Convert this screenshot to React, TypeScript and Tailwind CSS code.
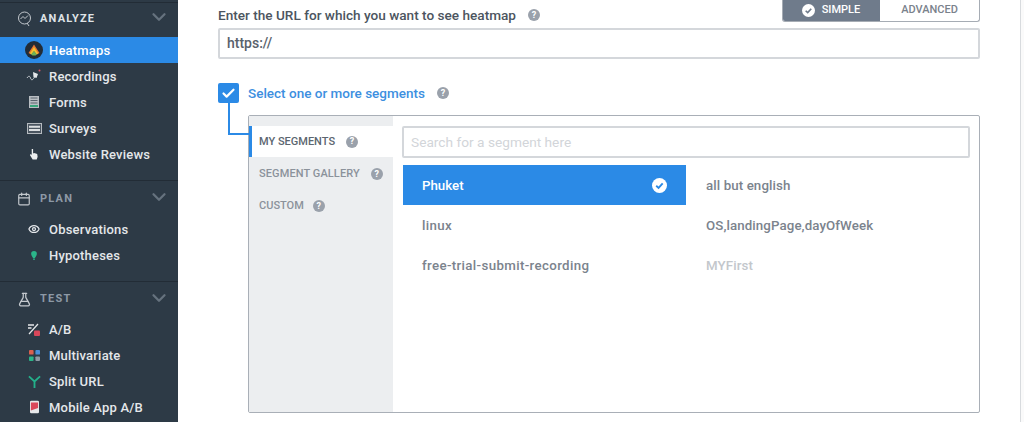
import React from 'react';
import { ChevronDown, Calendar, FlaskConical, Eye, Check } from 'lucide-react';

const font = "font-['Roboto','Liberation_Sans',sans-serif]";

const Help = ({ className = '' }: { className?: string }) => (
  <span className={`inline-flex items-center justify-center w-[12px] h-[12px] rounded-full bg-[#9aa1ab] text-white text-[9px] font-bold leading-none ${className}`}>?</span>
);

const CheckCircle = ({ color, size }: { color: string; size: number }) => (
  <svg width={size} height={size} viewBox="0 0 16 16">
    <circle cx="8" cy="8" r="8" fill="#fff" />
    <path d="M4.5 8.3 7 10.6 11.4 5.8" fill="none" stroke={color} strokeWidth="2" />
  </svg>
);

const HeatIcon = () => (
  <svg width="18" height="18" viewBox="0 0 18 18">
    <circle cx="9" cy="9" r="9" fill="#222c36" />
    <path d="M9 3.500 14.500 12 11.800 13.500 9 10 6.200 13.500 3.500 12Z" fill="#e8752e" />
    <path d="M9 6 13 12.300 11.800 13.500 9 10 6.200 13.500 5 12.300Z" fill="#f2c230" />
    <path d="M9 10 11.800 13.500 10.500 14.500H7.500L6.200 13.500Z" fill="#6fb255" />
  </svg>
);

const RecIcon = () => (
  <svg width="16" height="14" viewBox="0 0 16 14">
    <path d="M1 9c1.500-2.500 3-2 3.500 0s2 3 4-1" fill="none" stroke="#cfd4d9" strokeWidth="1" />
    <path d="M7 3 12 5 10.500 9 7.500 8Z" fill="#e6e8ea" />
    <circle cx="13.500" cy="1.500" r="1" fill="#e0566a" />
  </svg>
);

const FormIcon = () => (
  <svg width="10" height="12" viewBox="0 0 10 12">
    <rect width="10" height="12" fill="#b9bec3" />
    <path d="M1.500 2h7M1.500 4.500h7M1.500 7h7" stroke="#5a646e" strokeWidth="1" />
    <rect x="1" y="9" width="8" height="2" fill="#3aa67c" />
  </svg>
);

const SurveyIcon = () => (
  <svg width="15" height="11" viewBox="0 0 15 11">
    <rect x=".5" y=".5" width="14" height="10" fill="#4a5560" stroke="#b5babf" />
    <path d="M2 3.700h11M2 7h11" stroke="#dcdfe1" strokeWidth="2" />
  </svg>
);

const HandIcon = () => (
  <svg width="10" height="12" viewBox="0 0 11 13">
    <path d="M3 1h1.500v5l1-.5 1 .3 1 .2 1.500.5.500 3-1 3H4L1 7.500l1-1L3 7.500Z" fill="#eceeef" />
  </svg>
);

const BulbIcon = () => (
  <svg width="6" height="11" viewBox="0 0 8 12">
    <path d="M4 0a3.800 3.800 0 0 1 3.800 3.800C7.800 6.500 5.500 8 5 10H3C2.500 8 .2 6.500.2 3.800A3.800 3.800 0 0 1 4 0Z" fill="#2bb58a" />
    <rect x="3" y="10.500" width="2" height="1.500" fill="#2bb58a" />
  </svg>
);

const AbIcon = () => (
  <svg width="12" height="13" viewBox="0 0 12 13">
    <path d="M1 11 10 1" stroke="#e6e8ea" strokeWidth="1.200" />
    <path d="M0 2h6M0 5h3.500" stroke="#e6e8ea" strokeWidth="1.500" />
    <rect x="6" y="7.500" width="6" height="5.500" rx="1" fill="#d9475a" />
  </svg>
);

const MultiIcon = () => (
  <svg width="11" height="11" viewBox="0 0 12 12">
    <rect width="5" height="5" rx="1" fill="#d9604f" />
    <rect x="7" width="5" height="5" rx="1" fill="#4a8fd8" />
    <rect y="7" width="5" height="5" rx="1" fill="#2bb58a" />
    <rect x="7" y="7" width="5" height="5" rx="1" fill="#8f9aa5" />
  </svg>
);

const SplitIcon = () => (
  <svg width="15" height="13" viewBox="0 0 15 14">
    <path d="M1.500 1.500 7.500 7l6-5.500M7.500 7v7" fill="none" stroke="#23b08a" strokeWidth="2" />
  </svg>
);

const MobileIcon = () => (
  <svg width="9" height="14" viewBox="0 0 10 14">
    <rect width="10" height="14" rx="1.500" fill="#e6e8ea" />
    <path d="M1 2h8v6L1 11Z" fill="#d9475a" />
  </svg>
);

const AnalyzeIcon = () => (
  <svg width="15" height="16" viewBox="0 0 15 16" fill="none" stroke="#c3c8cd" strokeWidth="1">
    <circle cx="7.500" cy="7" r="6" />
    <path d="M3.500 8 6 5.500l2 2 3-3M10 12l2 3" />
  </svg>
);

const Item = ({ icon, label, active }: { icon: React.ReactNode; label: string; active?: boolean }) => (
  <div className={`flex items-center h-[26px] text-[13px] font-medium tracking-[.2px] ${active ? 'bg-[#2b8ae6] text-white' : 'text-[#e4e7ea]'}`}>
    <span className="w-[49px] pl-[25px] pr-[6px] flex justify-center">{icon}</span>
    <span className="pt-[1px]">{label}</span>
  </div>
);

const Section = ({ icon, label, bright, header = 'h-[36px] -mb-px', children }: { icon: React.ReactNode; label: string; bright?: boolean; header?: string; children: React.ReactNode }) => (
  <div className="border-b border-[#222c36] last:border-0">
    <div className={`flex items-center pl-[17px] pr-[8px] ${header}`}>
      <span className="w-[23px] flex">{icon}</span>
      <span className={`flex-1 text-[11px] font-bold tracking-[1.2px] ${bright ? 'text-[#dfe3e6]' : 'text-[#8d99a6]'}`}>{label}</span>
      <ChevronDown size={22} strokeWidth={2.500} className="text-[#66727e] -mt-[4px]" />
    </div>
    <div className="pb-[13px]">{children}</div>
  </div>
);

const Sidebar = () => (
  <aside className="w-[178px] shrink-0 h-[422px] overflow-hidden bg-[#2d3a46]">
    <div className="h-[3px] border-b border-[#222c36]" />
    <Section icon={<AnalyzeIcon />} label="ANALYZE" bright header="h-[32px] mb-[2px]">
      <Item icon={<HeatIcon />} label="Heatmaps" active />
      <Item icon={<RecIcon />} label="Recordings" />
      <Item icon={<FormIcon />} label="Forms" />
      <Item icon={<SurveyIcon />} label="Surveys" />
      <Item icon={<HandIcon />} label="Website Reviews" />
    </Section>
    <Section icon={<Calendar size={14} className="text-[#c3c8cd]" />} label="PLAN">
      <Item icon={<Eye size={12} strokeWidth={2.500} className="text-[#e4e7ea]" />} label="Observations" />
      <Item icon={<BulbIcon />} label="Hypotheses" />
    </Section>
    <Section icon={<FlaskConical size={15} className="text-[#c3c8cd]" />} label="TEST" header="h-[35px] -mb-px">
      <Item icon={<AbIcon />} label="A/B" />
      <Item icon={<MultiIcon />} label="Multivariate" />
      <Item icon={<SplitIcon />} label="Split URL" />
      <Item icon={<MobileIcon />} label="Mobile App A/B" />
    </Section>
  </aside>
);

const segments = [
  ['Phuket', 'all but english'],
  ['linux', 'OS,landingPage,dayOfWeek'],
  ['free-trial-submit-recording', 'MYFirst'],
];

const SegmentBox = () => (
  <div className="relative ml-[30px] mt-[12px] h-[298px] border border-[#a9afb7] rounded-[2px] flex">
    {/* connector from the checkbox */}
    <div className="absolute left-[-21px] top-[-13px] w-[21px] h-[32px] border-l-2 border-b-2 border-[#2b8ae6]" />
    <div className="w-[144px] shrink-0 bg-[#eceef0] pt-[10px] text-[11px] font-medium">
      <div className="h-[31px] bg-white border-l-[3px] border-[#2b8ae6] pl-[7px] flex items-center text-[#5c6670]">
        <span className="pt-[1px]">MY SEGMENTS</span><Help className="ml-[11px]" />
      </div>
      <div className="h-[32px] mt-px pl-[10px] flex items-center text-[#8b929b]">
        <span className="pt-[1px] tracking-[.1px]">SEGMENT GALLERY</span><Help className="ml-[11px]" />
      </div>
      <div className="h-[32px] pl-[10px] flex items-center text-[#8b929b]">
        <span className="pt-[1px]">CUSTOM</span><Help className="ml-[9px]" />
      </div>
    </div>
    <div className="flex-1 pt-[10px] pl-[10px] pr-[10px]">
      <div className="h-[32px] -mx-px border-2 border-[#d4d7db] rounded-[2px] flex items-center pl-[7px] text-[13.7px] text-[#d2d5d9]">
        Search for a segment here
      </div>
      <div className="mt-[7px] grid grid-cols-2 text-[13.3px] font-medium">
        {segments.map(([a, b]) => (
          <React.Fragment key={a}>
            <div className={`h-[40px] pl-[19px] pr-[19px] flex items-center justify-between ${a === 'Phuket' ? 'bg-[#2b8ae6] text-white' : 'text-[#7b838d] tracking-[.35px]'}`}>
              <span className="pt-[1px]">{a}</span>
              {a === 'Phuket' && <CheckCircle color="#2b8ae6" size={15} />}
            </div>
            <div className={`h-[40px] pl-[20px] flex items-center tracking-[.1px] ${b === 'MYFirst' ? 'text-[#c3c7cc]' : 'text-[#7b838d]'}`}>
              <span className="pt-[1px]">{b}</span>
            </div>
          </React.Fragment>
        ))}
      </div>
    </div>
  </div>
);

export default function App() {
  return (
    <div className={`w-[1024px] h-[422px] overflow-hidden flex bg-[#fafafa] ${font}`}>
      <Sidebar />
      <main className="flex-1 bg-white border-r border-[#d8dbde] mr-[3px] pl-[40px] pr-[40px]">
        <div className="flex justify-between h-[28px]">
          <div className="flex items-center h-[30px] text-[13.6px] font-medium text-[#4c5560]">
            Enter the URL for which you want to see heatmap<Help className="ml-[12px]" />
          </div>
          <div className="flex w-[198px] h-[22px] border border-t-0 border-[#a6acb4] rounded-b-[3px] overflow-hidden text-[11px] font-medium">
            <div className="w-[98px] -ml-px bg-[#6f7b8b] text-white flex items-center justify-center gap-[7px]">
              <CheckCircle color="#6f7b8b" size={13} />
              SIMPLE
            </div>
            <div className="flex-1 text-[#7a828c] flex items-center justify-center">ADVANCED</div>
          </div>
        </div>
        <div className="h-[31px] border-2 border-[#d4d7db] rounded-[2px] flex items-center pl-[7px] text-[14px] font-medium text-[#59626c]">
          https://
        </div>
        <div className="mt-[24px] flex items-center h-[20px]">
          <span className="w-[21px] h-[20px] rounded-[2px] bg-[#2b8ae6] flex items-center justify-center">
            <Check size={15} strokeWidth={3.500} className="text-white" />
          </span>
          <span className="ml-[9px] pt-[1px] text-[13.500px] font-medium text-[#3d8fdf]">Select one or more segments</span>
          <Help className="ml-[12px]" />
        </div>
        <SegmentBox />
      </main>
    </div>
  );
}
